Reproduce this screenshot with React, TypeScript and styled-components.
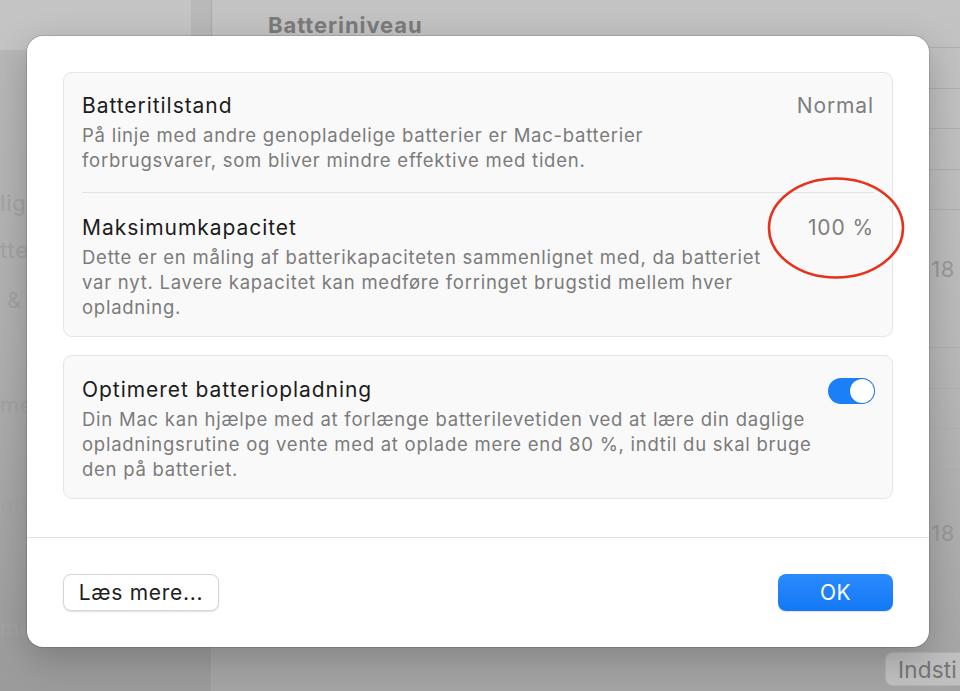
import React from "react";
import styled, { createGlobalStyle } from "styled-components";

const GlobalStyle = createGlobalStyle`
  html, body { margin: 0; padding: 0; width: 960px; height: 691px; overflow: hidden; }
  body { font-family: Inter, "Noto Sans", "Liberation Sans", sans-serif; -webkit-font-smoothing: antialiased; }
  * { box-sizing: border-box; }
`;

const Screen = styled.div`
  position: relative;
  width: 960px;
  height: 691px;
  overflow: hidden;
  display: grid;
  grid-template-columns: 212px 1fr;
  background: linear-gradient(180deg, #c3c3c3 0%, #b9b9b9 50%, #a4a4a4 100%);
`;

const Sidebar = styled.aside`
  display: flex;
  flex-direction: column;
  background: linear-gradient(180deg, #b9b9b9 0%, #afafaf 50%, #9b9b9b 100%);
  border-right: 1px solid #a8a8a8;
`;

const SidebarTop = styled.div`
  height: 50px;
  margin-right: 20px;
  background: #c4c4c4;
  border-radius: 0 0 14px 0;
`;

const SideItem = styled.div<{ $mt: number; $indent?: number }>`
  height: 46px;
  margin-top: ${(p) => p.$mt}px;
  padding-left: ${(p) => p.$indent ?? 0}px;
  display: flex;
  align-items: center;
  font-size: 22px;
  letter-spacing: 0.8px;
  color: #a3a3a3;
  white-space: nowrap;
`;

const Main = styled.main`
  display: flex;
  flex-direction: column;
  padding-left: 38px;
`;

const Header = styled.h2`
  margin: 0;
  height: 47px;
  padding: 10px 0 0 18px;
  font-size: 22px;
  line-height: 30px;
  letter-spacing: 0.9px;
  font-weight: 700;
  color: #7b7b7b;
`;

const Chart = styled.div<{ $mt?: number }>`
  display: flex;
  flex-direction: column;
  margin-top: ${(p) => p.$mt ?? 0}px;
  border-bottom: 1px solid #afafaf;
`;

const GridCell = styled.div`
  height: 40.5px;
  border-top: 1px solid #afafaf;
`;

const AxisRow = styled.div<{ $mt: number }>`
  height: 40px;
  margin-top: ${(p) => p.$mt}px;
  display: flex;
  align-items: center;
  justify-content: flex-end;
  padding-right: 5px;
  font-size: 22px;
  letter-spacing: 0.6px;
  color: #999999;
`;

const Rule = styled.div`
  margin-top: 60px;
  border-top: 1px solid #a8a8a8;
`;

const Footer = styled.div`
  display: flex;
  justify-content: flex-end;
  margin-top: 38px;
`;

const GhostButton = styled.div`
  height: 34px;
  width: 75px;
  padding-left: 12px;
  display: flex;
  align-items: center;
  overflow: hidden;
  font-size: 22.5px;
  letter-spacing: 0.2px;
  color: #767676;
  background: #c0c0c0;
  border: 1px solid #b2b2b2;
  border-right: none;
  border-radius: 8px 0 0 8px;
  white-space: nowrap;
`;

const Dialog = styled.section`
  position: absolute;
  left: 27px;
  top: 36px;
  width: 902px;
  background: #ffffff;
  border-radius: 16px;
  box-shadow: 0 0 0 1px rgba(0, 0, 0, 0.12), 0 12px 36px rgba(0, 0, 0, 0.22);
  display: flex;
  flex-direction: column;
`;

const DialogBody = styled.div`
  display: flex;
  flex-direction: column;
  gap: 18px;
  padding: 36px 36px 38px;
`;

const Card = styled.div`
  background: #f9f9f9;
  border: 1px solid #e6e6e6;
  border-radius: 9px;
  padding: 0 18px;
  display: flex;
  flex-direction: column;
`;

const Row = styled.div<{ $pt: number; $pb: number; $divider?: boolean }>`
  display: flex;
  align-items: flex-start;
  gap: 16px;
  padding-top: ${(p) => p.$pt}px;
  padding-bottom: ${(p) => p.$pb}px;
  border-bottom: ${(p) => (p.$divider ? "1px solid #e3e3e3" : "none")};
`;

const RowText = styled.div`
  flex: 1;
  display: flex;
  flex-direction: column;
  gap: 4px;
`;

const Title = styled.div`
  font-size: 21px;
  line-height: 26px;
  letter-spacing: 0.95px;
  color: #1c1c1c;
`;

const Desc = styled.div`
  font-size: 18.5px;
  line-height: 25px;
  letter-spacing: 0.75px;
  color: #7b7b7b;
  white-space: nowrap;
`;

const Value = styled.div`
  font-size: 21px;
  line-height: 26px;
  letter-spacing: 0.9px;
  color: #7e7e7e;
  white-space: nowrap;
`;

const Toggle = styled.div<{ $on: boolean }>`
  width: 47px;
  height: 26px;
  margin-top: 1px;
  border-radius: 13px;
  background: ${(p) => (p.$on ? "#1b7ff8" : "#dcdcdc")};
  display: flex;
  align-items: center;
  justify-content: ${(p) => (p.$on ? "flex-end" : "flex-start")};
  padding: 1px;
  flex-shrink: 0;
`;

const Knob = styled.div`
  width: 24px;
  height: 24px;
  border-radius: 50%;
  background: #ffffff;
  box-shadow: 0 0 0 0.5px rgba(0, 0, 0, 0.15);
`;

const DialogFooter = styled.div`
  border-top: 1px solid #e2e2e2;
  padding: 36px;
  display: flex;
  justify-content: space-between;
  align-items: center;
`;

const Button = styled.button<{ $primary?: boolean }>`
  height: 37px;
  min-width: ${(p) => (p.$primary ? "115px" : "156px")};
  padding: 0 12px;
  border-radius: 8px;
  font-family: inherit;
  font-size: 21px;
  letter-spacing: ${(p) => (p.$primary ? "0.4px" : "0.7px")};
  display: flex;
  align-items: center;
  justify-content: center;
  cursor: pointer;
  color: ${(p) => (p.$primary ? "#ffffff" : "#1e1e1e")};
  background: ${(p) => (p.$primary ? "linear-gradient(180deg, #2a8bfd 0%, #1378f6 100%)" : "#ffffff")};
  border: ${(p) => (p.$primary ? "none" : "1px solid #d6d6d6")};
  box-shadow: ${(p) => (p.$primary ? "0 1px 1px rgba(0,0,0,0.12)" : "0 1px 1.5px rgba(0,0,0,0.12)")};
`;

const Annotation = styled.svg`
  position: absolute;
  left: 766px;
  top: 176px;
  pointer-events: none;
`;

export default function App() {
  return (
    <>
      <GlobalStyle />
      <Screen>
        <Sidebar>
          <SidebarTop />
          <SideItem $mt={130}>lige</SideItem>
          <SideItem $mt={1}>tter</SideItem>
          <SideItem $mt={4} $indent={7}>&amp;</SideItem>
          <SideItem $mt={59}>mer</SideItem>
          <SideItem $mt={54}>ghe</SideItem>
          <SideItem $mt={77}>mer</SideItem>
        </Sidebar>
        <Main>
          <Header>Batteriniveau</Header>
          <Chart>
            <GridCell />
            <GridCell />
            <GridCell />
            <GridCell />
          </Chart>
          <AxisRow $mt={39}>18</AxisRow>
          <Chart $mt={58}>
            <GridCell />
            <GridCell />
            <GridCell />
            <GridCell />
          </Chart>
          <AxisRow $mt={3}>18</AxisRow>
          <Rule />
          <Footer>
            <GhostButton>Indsti</GhostButton>
          </Footer>
        </Main>

        <Dialog>
          <DialogBody>
            <Card>
              <Row $pt={20} $pb={19} $divider>
                <RowText>
                  <Title>Batteritilstand</Title>
                  <Desc>
                    På linje med andre genopladelige batterier er Mac-batterier
                    <br />
                    forbrugsvarer, som bliver mindre effektive med tiden.
                  </Desc>
                </RowText>
                <Value>Normal</Value>
              </Row>
              <Row $pt={22} $pb={16}>
                <RowText>
                  <Title>Maksimumkapacitet</Title>
                  <Desc>
                    Dette er en måling af batterikapaciteten sammenlignet med, da batteriet
                    <br />
                    var nyt. Lavere kapacitet kan medføre forringet brugstid mellem hver
                    <br />
                    opladning.
                  </Desc>
                </RowText>
                <Value>100 %</Value>
              </Row>
            </Card>
            <Card>
              <Row $pt={21} $pb={16}>
                <RowText>
                  <Title>Optimeret batteriopladning</Title>
                  <Desc>
                    Din Mac kan hjælpe med at forlænge batterilevetiden ved at lære din daglige
                    <br />
                    opladningsrutine og vente med at oplade mere end 80 %, indtil du skal bruge
                    <br />
                    den på batteriet.
                  </Desc>
                </RowText>
                <Toggle $on>
                  <Knob />
                </Toggle>
              </Row>
            </Card>
          </DialogBody>
          <DialogFooter>
            <Button>Læs mere...</Button>
            <Button $primary>OK</Button>
          </DialogFooter>
        </Dialog>

        <Annotation width="140" height="106" viewBox="0 0 140 106">
          <ellipse cx="70" cy="52" rx="67" ry="49.5" fill="none" stroke="#e8301a" strokeWidth="2.6" />
        </Annotation>
      </Screen>
    </>
  );
}
